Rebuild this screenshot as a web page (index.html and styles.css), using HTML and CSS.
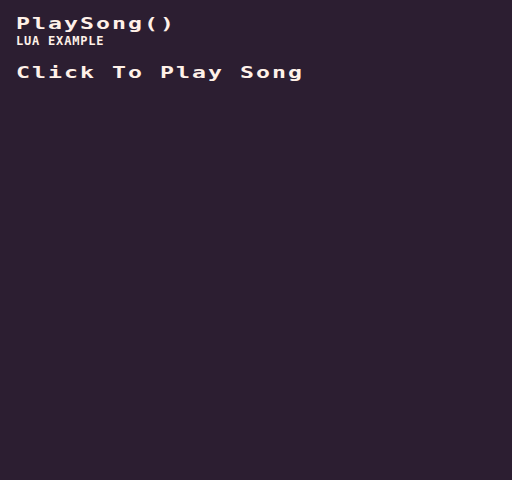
FILE: index.html
```html
<!DOCTYPE html>
<html>
<head>
<meta charset="utf-8">
<link rel="stylesheet" href="styles.css">
</head>
<body>
<div class="screen">
  <h1 class="title"><span class="wide">PlaySong()</span></h1>
  <p class="subtitle">Lua Example</p>
  <p class="action"><span class="wide">Click To Play Song</span></p>
</div>
</body>
</html>
```

FILE: styles.css
```css
html, body {
  margin: 0;
  padding: 0;
  background: #2c1e31;
}
.screen {
  width: 512px;
  height: 480px;
  box-sizing: border-box;
  padding: 16px 0 0 16px;
  display: flex;
  flex-direction: column;
  align-items: flex-start;
  color: #fff1e8;
  font-family: "DejaVu Sans Mono", "Liberation Mono", monospace;
  font-weight: bold;
}
.wide {
  display: inline-block;
  transform: scaleX(1.45);
  transform-origin: left center;
  white-space: nowrap;
}
.title {
  margin: 0;
  font-size: 16px;
  line-height: 16px;
  letter-spacing: 1.4px;
  font-weight: bold;
}
.subtitle {
  margin: 3px 0 0 0;
  font-size: 12px;
  line-height: 12px;
  letter-spacing: 0.8px;
  text-transform: uppercase;
}
.action {
  margin: 18px 0 0 0;
  font-size: 16px;
  line-height: 16px;
  letter-spacing: 1.4px;
}
```
